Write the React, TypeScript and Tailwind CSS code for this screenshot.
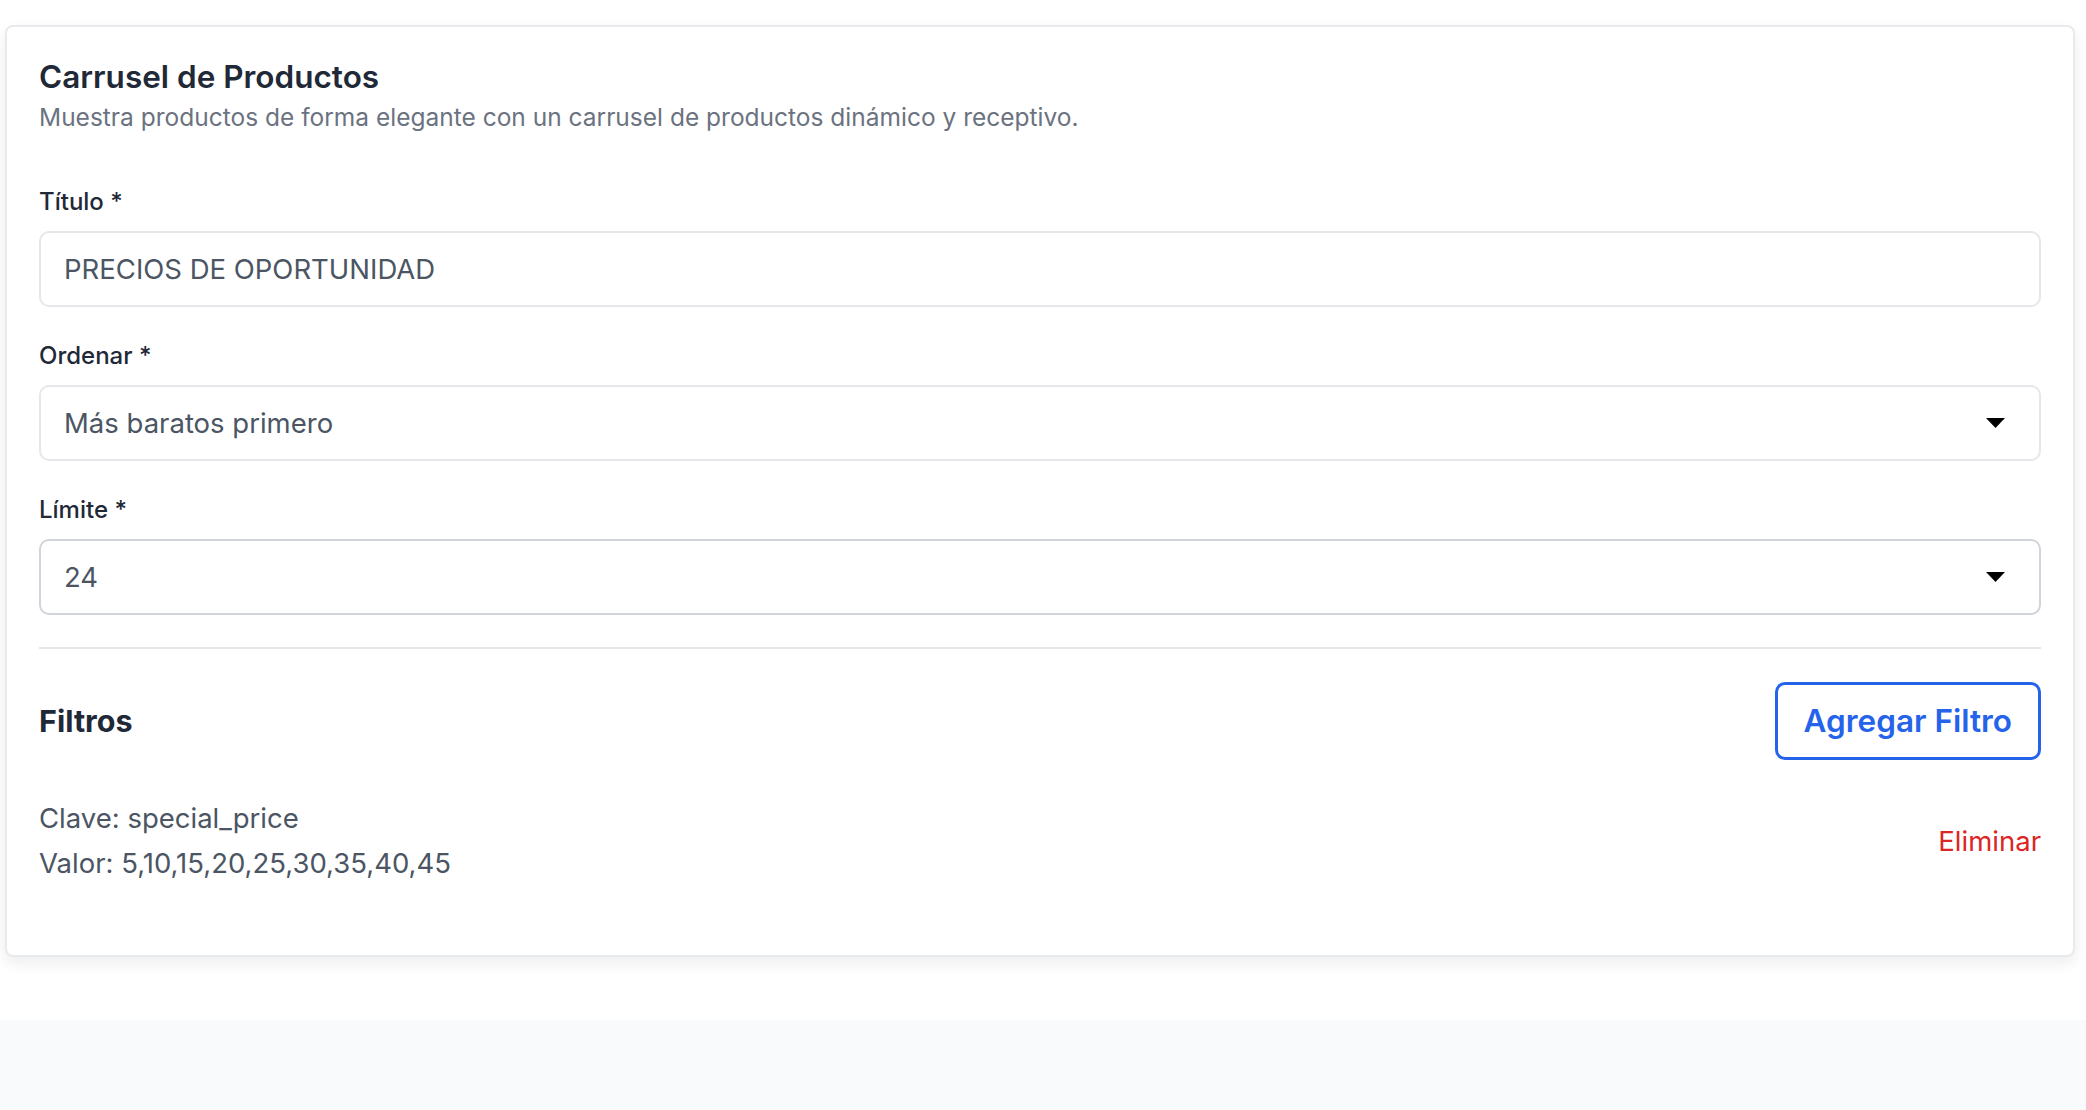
import React, { useState } from 'react';

interface Filter {
  key: string;
  value: string;
}

const Caret: React.FC = () => (
  <svg
    className="pointer-events-none absolute right-[36px] top-1/2 -translate-y-1/2"
    width="19"
    height="10"
    viewBox="0 0 19 10"
  >
    <polygon points="0,0 19,0 9.5,10" fill="#000" />
  </svg>
);

const Label: React.FC<{ text: string }> = ({ text }) => (
  <label className="block text-[24px] leading-[36px] font-medium text-[#1f2937] mb-[11px]">
    {text} *
  </label>
);

const App: React.FC = () => {
  const [title, setTitle] = useState('PRECIOS DE OPORTUNIDAD');
  const [order, setOrder] = useState('price_asc');
  const [limit, setLimit] = useState('24');
  const [filters, setFilters] = useState<Filter[]>([
    { key: 'special_price', value: '5,10,15,20,25,30,35,40,45' },
  ]);

  return (
    <div className="min-h-[1110px] bg-[#f9fafb] font-['Inter','Noto_Sans',sans-serif]">
      <div className="h-[1020px] bg-white pt-[25px] pl-[5px]">
        <div className="w-[2070px] rounded-[8px] border-2 border-[#e9eaee] bg-white px-[32px] pt-[32px] pb-[69px] shadow-[0_6px_14px_rgba(17,24,39,0.08)]">
          <h2 className="text-[31.5px] leading-[36px] font-semibold text-[#1f2937]">
            Carrusel de Productos
          </h2>
          <p className="mt-[3px] text-[24.5px] leading-[39px] text-[#6b7280]">
            Muestra productos de forma elegante con un carrusel de productos dinámico y receptivo.
          </p>

          <div className="mt-[47px] flex flex-col gap-[31px]">
            <div>
              <Label text="Título" />
              <input
                value={title}
                onChange={(e) => setTitle(e.target.value)}
                className="block h-[76px] w-full rounded-[10px] border-2 border-[#e5e7eb] bg-white px-[23px] text-[27.5px] leading-[36px] text-[#4b5563] outline-none"
              />
            </div>

            <div>
              <Label text="Ordenar" />
              <div className="relative">
                <select
                  value={order}
                  onChange={(e) => setOrder(e.target.value)}
                  className="block h-[76px] w-full appearance-none rounded-[10px] border-2 border-[#e5e7eb] bg-white px-[23px] text-[27.5px] leading-[36px] text-[#4b5563] outline-none"
                >
                  <option value="price_asc">Más baratos primero</option>
                  <option value="price_desc">Más caros primero</option>
                  <option value="newest">Más nuevos primero</option>
                </select>
                <Caret />
              </div>
            </div>

            <div>
              <Label text="Límite" />
              <div className="relative">
                <select
                  value={limit}
                  onChange={(e) => setLimit(e.target.value)}
                  className="block h-[76px] w-full appearance-none rounded-[10px] border-2 border-[#d1d5db] bg-white px-[23px] text-[27.5px] leading-[36px] text-[#4b5563] outline-none"
                >
                  <option value="12">12</option>
                  <option value="24">24</option>
                  <option value="36">36</option>
                </select>
                <Caret />
              </div>
            </div>
          </div>

          <div className="mt-[32px] h-[2px] bg-[#e5e7eb]" />

          <div className="mt-[33px] flex items-center justify-between">
            <h3 className="text-[30.5px] leading-[36px] font-bold text-[#1f2937]">Filtros</h3>
            <button className="h-[78px] rounded-[10px] border-[3px] border-[#2563eb] px-[26px] text-[31.5px] leading-[36px] font-semibold text-[#2563eb]">
              Agregar Filtro
            </button>
          </div>

          <div className="mt-[36px] flex flex-col">
            {filters.map((f, i) => (
              <div key={f.key} className="flex items-center justify-between">
                <div className="text-[27.5px] leading-[45px] text-[#4b5563]">
                  <p>Clave: {f.key}</p>
                  <p>Valor: {f.value}</p>
                </div>
                <button
                  onClick={() => setFilters(filters.filter((_, j) => j !== i))}
                  className="text-[27.5px] leading-[39px] text-[#dc2626]"
                >
                  Eliminar
                </button>
              </div>
            ))}
          </div>
        </div>
      </div>
    </div>
  );
};

export default App;
